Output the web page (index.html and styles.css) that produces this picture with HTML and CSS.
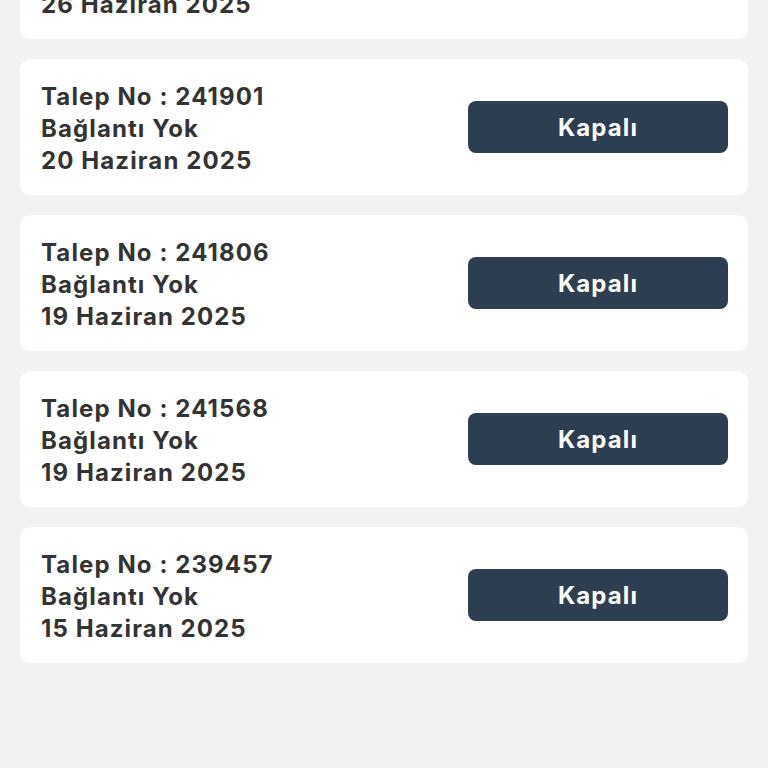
FILE: index.html
```html
<!DOCTYPE html>
<html lang="tr">
<head>
<meta charset="utf-8">
<title>Talepler</title>
<link rel="stylesheet" href="styles.css">
</head>
<body>
<main class="list">
  <div class="card">
    <div class="info">
      <div>Talep No : 242010</div>
      <div>Bağlantı Yok</div>
      <div>26 Haziran 2025</div>
    </div>
    <button class="status">Kapalı</button>
  </div>
  <div class="card">
    <div class="info">
      <div>Talep No : 241901</div>
      <div>Bağlantı Yok</div>
      <div>20 Haziran 2025</div>
    </div>
    <button class="status">Kapalı</button>
  </div>
  <div class="card">
    <div class="info">
      <div>Talep No : 241806</div>
      <div>Bağlantı Yok</div>
      <div>19 Haziran 2025</div>
    </div>
    <button class="status">Kapalı</button>
  </div>
  <div class="card">
    <div class="info">
      <div>Talep No : 241568</div>
      <div>Bağlantı Yok</div>
      <div>19 Haziran 2025</div>
    </div>
    <button class="status">Kapalı</button>
  </div>
  <div class="card">
    <div class="info">
      <div>Talep No : 239457</div>
      <div>Bağlantı Yok</div>
      <div>15 Haziran 2025</div>
    </div>
    <button class="status">Kapalı</button>
  </div>
</main>
</body>
</html>
```
FILE: styles.css
```css
html, body {
  margin: 0;
  padding: 0;
  background: #f2f2f2;
  height: 100%;
  overflow: hidden;
}
body {
  font-family: "Inter", "Noto Sans", sans-serif;
  color: #333333;
}
.list {
  display: flex;
  flex-direction: column;
  gap: 20px;
  padding: 0 20px;
  margin-top: -97px;
}
.card {
  background: #ffffff;
  border-radius: 10px;
  height: 136px;
  box-sizing: border-box;
  padding: 20px 20px 20px 21px;
  display: flex;
  align-items: center;
  justify-content: space-between;
}
.info {
  font-size: 24px;
  font-weight: 700;
  line-height: 32px;
  letter-spacing: 1.1px;
  padding-top: 3px;
}
.status {
  width: 260px;
  height: 52px;
  border: none;
  border-radius: 8px;
  background: #2c3e50;
  color: #ffffff;
  font-family: "Inter", "Noto Sans", sans-serif;
  font-size: 24px;
  font-weight: 700;
  letter-spacing: 1.1px;
  padding: 0;
}
```
